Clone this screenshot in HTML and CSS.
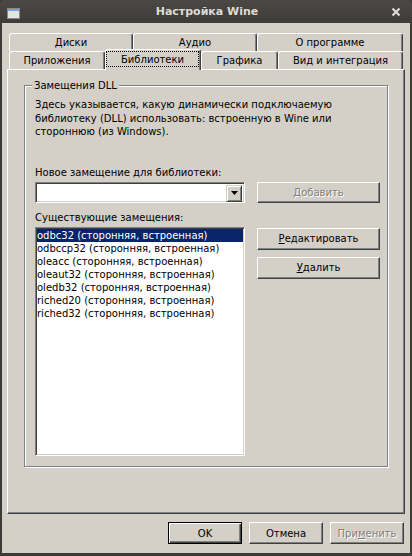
FILE: index.html
```html
<!DOCTYPE html>
<html lang="ru">
<head>
  <meta charset="UTF-8" />
  <title>Настройка Wine</title>
  <link rel="stylesheet" href="styles.css">
</head>
<body>
  <div class="window">
    <div class="titlebar">
      <svg class="app-icon" width="13" height="11" viewBox="0 0 13 11">
        <rect x="0.5" y="0.5" width="12" height="10" fill="#e4e4e4" stroke="#8a8a8a" />
        <rect x="1" y="1" width="11" height="2" fill="#7b9fe0" />
      </svg>
      <span class="title">Настройка Wine</span>
      <svg class="close" width="10" height="10" viewBox="0 0 10 10">
        <path d="M1.5 1.5 L8.5 8.5 M8.5 1.5 L1.5 8.5" stroke="#dfdbd2" stroke-width="2.2" />
      </svg>
    </div>

    <div class="client">
      <div class="tabs">
        <div class="tab-row">
          <div class="tab t-disks">Диски</div>
          <div class="tab t-audio">Аудио</div>
          <div class="tab t-about">О программе</div>
        </div>
        <div class="tab-row">
          <div class="tab t-apps">Приложения</div>
          <div class="tab t-libs active"><span class="focus">Библиотеки</span></div>
          <div class="tab t-graphics">Графика</div>
          <div class="tab t-desktop">Вид и интеграция</div>
        </div>
      </div>

      <div class="panel">
        <fieldset class="group">
          <legend>Замещения DLL</legend>
          <p class="desc">Здесь указывается, какую динамически подключаемую<br>библиотеку (DLL) использовать: встроенную в Wine или<br>стороннюю (из Windows).</p>

          <label class="field-label first">Новое замещение для библиотеки:</label>
          <div class="row">
            <div class="combo">
              <span class="combo-btn">
                <svg width="7" height="4" viewBox="0 0 7 4"><path d="M0 0 H7 L3.5 4 Z" fill="#000" /></svg>
              </span>
            </div>
            <button class="btn side" disabled><u>Д</u>обавить</button>
          </div>

          <label class="field-label">Существующие замещения:</label>
          <div class="row">
            <ul class="listbox">
              <li class="selected">odbc32 (сторонняя, встроенная)</li>
              <li>odbccp32 (сторонняя, встроенная)</li>
              <li>oleacc (сторонняя, встроенная)</li>
              <li>oleaut32 (сторонняя, встроенная)</li>
              <li>oledb32 (сторонняя, встроенная)</li>
              <li>riched20 (сторонняя, встроенная)</li>
              <li>riched32 (сторонняя, встроенная)</li>
            </ul>
            <div class="side-buttons">
              <button class="btn side tall"><u>Р</u>едактировать</button>
              <button class="btn side tall"><u>У</u>далить</button>
            </div>
          </div>
        </fieldset>
      </div>

      <div class="dialog-buttons">
        <button class="btn dlg default">OK</button>
        <button class="btn dlg">Отмена</button>
        <button class="btn dlg" disabled>При<u>м</u>енить</button>
      </div>
    </div>
  </div>
</body>
</html>
```

FILE: styles.css
```css
:root {
  --face: #d4d0c8;
  --shadow: #808080;
  --dark: #404040;
  --light: #ffffff;
  --frame: #3c3b37;
  --select: #0a246a;
}

body {
  margin: 0;
  background: var(--frame);
  font-family: 'DejaVu Sans', sans-serif;
  font-size: 10px;
  color: #000;
}

.window {
  width: 412px;
  height: 556px;
  display: flex;
  flex-direction: column;
  background: var(--frame);
  border-radius: 5px 5px 0 0;
  overflow: hidden;
}

/* title bar */
.titlebar {
  height: 23px;
  flex: none;
  display: flex;
  align-items: center;
  padding: 0 11px 0 7px;
  background: linear-gradient(#4a4945, #3c3b37);
  color: #dfdbd2;
}

.app-icon {
  margin-top: 3px;
}

.title {
  flex: 1;
  text-align: center;
  font-weight: bold;
  font-size: 11px;
  padding-left: 3px;
}

/* client area */
.client {
  flex: 1;
  margin: 0 2px 3px;
  padding: 10px 5px 0;
  background: var(--face);
  display: flex;
  flex-direction: column;
}

.tabs {
  margin: 0 2px;
}

.tab-row {
  display: flex;
  align-items: flex-start;
  height: 18px;
}

.tab {
  box-sizing: border-box;
  height: 18px;
  border: 1px solid;
  border-bottom: none;
  border-color: var(--light) var(--dark) transparent var(--light);
  border-radius: 3px 3px 0 0;
  box-shadow: inset -1px 0 0 var(--shadow);
  background: var(--face);
  display: flex;
  align-items: center;
  justify-content: center;
}

.t-disks, .t-audio { width: 124px; }
.t-about { width: 146px; }
.t-apps, .t-libs { width: 96px; }
.t-graphics { width: 77px; }
.t-desktop { width: 125px; }

.tab.active {
  height: 21px;
  margin-top: -2px;
  margin-bottom: -1px;
  padding: 1px 1px 3px 0;
  position: relative;
  z-index: 1;
}

.focus {
  flex: 1;
  align-self: stretch;
  display: flex;
  align-items: center;
  justify-content: center;
  border: 1px dotted #000;
}

.panel {
  box-sizing: border-box;
  height: 445px;
  border: 1px solid;
  border-color: var(--light) var(--dark) var(--dark) var(--light);
  box-shadow: inset -1px -1px 0 var(--shadow);
  padding: 9px 0 0 16px;
}

/* group box */
.group {
  box-sizing: border-box;
  width: 364px;
  margin: 0;
  padding: 6px 0 10px 10px;
  border: 1px solid var(--shadow);
  box-shadow: 1px 1px 0 var(--light), inset 1px 1px 0 var(--light);
}

.group legend {
  padding: 0 2px;
  margin-left: -3px;
  line-height: 13px;
  background: var(--face);
}

.desc {
  margin: 0;
  line-height: 13.5px;
}

.field-label {
  display: block;
  line-height: 13px;
  margin-top: 8px;
}

.field-label.first {
  margin-top: 27px;
}

.row {
  display: flex;
  align-items: flex-start;
  gap: 12px;
  margin-top: 3px;
}

.combo {
  box-sizing: border-box;
  width: 210px;
  height: 21px;
  padding: 2px;
  background: #fff;
  border: 1px solid;
  border-color: var(--shadow) var(--light) var(--light) var(--shadow);
  box-shadow: inset 1px 1px 0 var(--dark), inset -1px -1px 0 var(--face);
  display: flex;
  justify-content: flex-end;
}

.combo-btn {
  box-sizing: border-box;
  width: 16px;
  height: 17px;
  background: var(--face);
  border: 1px solid;
  border-color: var(--face) var(--dark) var(--dark) var(--face);
  box-shadow: inset 1px 1px 0 var(--light), inset -1px -1px 0 var(--shadow);
  display: flex;
  align-items: center;
  justify-content: center;
}

.listbox {
  box-sizing: border-box;
  width: 210px;
  height: 229px;
  margin: 0;
  padding: 1px;
  list-style: none;
  background: #fff;
  border: 1px solid;
  border-color: var(--shadow) var(--light) var(--light) var(--shadow);
  box-shadow: inset 1px 1px 0 var(--dark), inset -1px -1px 0 var(--face);
}

.listbox li {
  height: 13px;
  line-height: 13px;
  white-space: nowrap;
}

.listbox li.selected {
  background: var(--select);
  color: #fff;
}

.side-buttons {
  display: flex;
  flex-direction: column;
  gap: 7px;
  margin-top: 1px;
}

/* buttons */
.btn {
  box-sizing: border-box;
  font: inherit;
  color: #000;
  padding: 0;
  background: var(--face);
  border: 1px solid;
  border-color: var(--light) var(--dark) var(--dark) var(--light);
  box-shadow: inset -1px -1px 0 var(--shadow);
}

.btn:disabled {
  color: var(--shadow);
  text-shadow: 1px 1px 0 var(--light);
}

.btn.side {
  width: 123px;
  height: 21px;
}

.btn.tall {
  height: 22px;
}

.dialog-buttons {
  display: flex;
  justify-content: flex-end;
  gap: 7px;
  margin: 8px 1px 0 0;
}

.btn.dlg {
  width: 74px;
  height: 22px;
}

.btn.default {
  border-color: #000;
  box-shadow: inset 1px 1px 0 var(--light), inset -1px -1px 0 var(--dark), inset -2px -2px 0 var(--shadow);
}
```
